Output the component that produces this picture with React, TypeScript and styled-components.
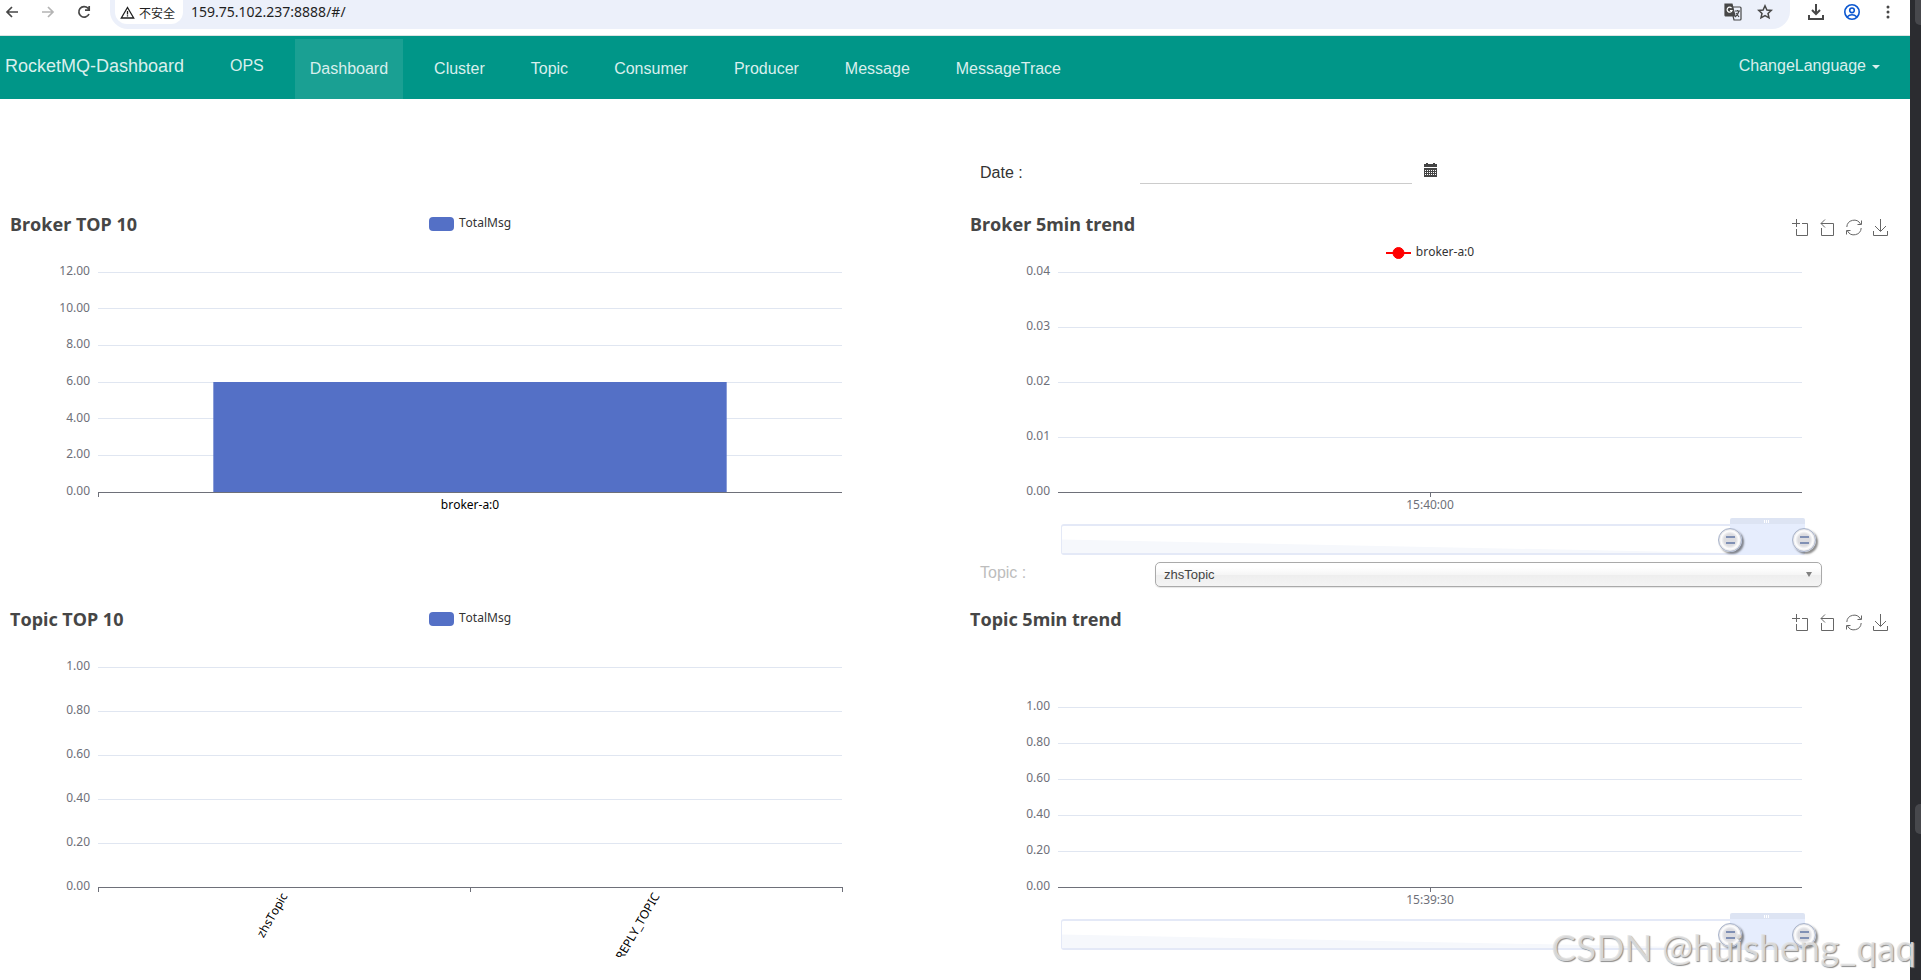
import React, { useState } from "react";
import styled, { createGlobalStyle } from "styled-components";

const UI_FONT = `"Liberation Sans", Arial, sans-serif`;
const CHART_FONT = `"Noto Sans", "Noto Sans CJK SC", sans-serif`;

const GlobalStyle = createGlobalStyle`
  * { box-sizing: border-box; }
  body { margin: 0; background: #fff; color: #333; font-family: ${UI_FONT}; font-size: 16px; }
  button, input, select { font: inherit; }
  button { border: 0; padding: 0; background: none; color: inherit; cursor: pointer; }
  h1, h2, ul { margin: 0; padding: 0; }
`;

const Screen = styled.div`
  display: flex;
  min-height: 100vh;
  position: relative;
  overflow: hidden;
`;

const Window = styled.div`
  flex: 1;
  min-width: 0;
`;

const Rail = styled.aside`
  width: 11px;
  background: #2b2c30;
  display: flex;
  flex-direction: column;
  justify-content: space-between;
  align-items: flex-end;
  padding-bottom: 146px;
`;

const RailTab = styled.div`
  width: 6px;
  height: 25px;
  background: #47484c;
  border-radius: 0 0 0 5px;
`;

const RailHandle = styled(RailTab)`
  height: 30px;
  border-radius: 5px 0 0 5px;
`;

/* ---------- browser bar ---------- */

const BrowserBar = styled.header`
  height: 36px;
  display: flex;
  align-items: flex-start;
  border-bottom: 1px solid #dbe3e2;
  color: #474747;
  padding-right: 4px;
`;

const BarButton = styled.button<{ $dim?: boolean; $narrow?: boolean }>`
  width: ${(p) => (p.$narrow ? 32 : 36)}px;
  height: 24px;
  display: flex;
  align-items: center;
  justify-content: center;
  color: ${(p) => (p.$dim ? "#b4b4b4" : "inherit")};
`;

const HistoryButtons = styled.div`
  display: flex;
  width: 110px;
  margin-left: -6px;
`;

const AddressBar = styled.div`
  flex: 1;
  height: 29px;
  margin-left: 6px;
  margin-right: 8px;
  display: flex;
  background: #ecf0fa;
  border-radius: 0 0 18px 18px;
  padding: 0 9px 0 5px;
`;

const SecurityChip = styled.button`
  height: 24px;
  width: 68px;
  background: #fff;
  border-radius: 0 0 12px 12px;
  display: flex;
  align-items: center;
  gap: 4px;
  padding-left: 5px;
  font-family: "Noto Sans CJK SC", sans-serif;
  font-size: 12px;
  color: #1f1f1f;
  white-space: nowrap;
`;

const Url = styled.input`
  flex: 1;
  height: 22px;
  margin-left: 8px;
  padding: 0;
  border: 0;
  outline: 0;
  background: none;
  font-family: ${CHART_FONT};
  font-size: 14px;
  color: #1f1f1f;
`;

const GlyphBox = styled.svg`
  display: block;
  flex: none;
  fill: none;
  stroke: currentColor;
`;

/* ---------- application navbar ---------- */

const Navbar = styled.nav`
  height: 63px;
  background: #009688;
  display: flex;
  align-items: flex-start;
  padding: 0 15px 0 5px;
  color: #d9efed;
  line-height: 60px;
`;

const Brand = styled.a`
  width: 225px;
  font-size: 18px;
  color: inherit;
  text-decoration: none;
`;

const OpsLink = styled.a`
  margin-right: 31px;
  color: inherit;
  text-decoration: none;
`;

const Tabs = styled.ul`
  display: flex;
  gap: 16px;
  margin-top: 3px;
  list-style: none;
`;

const TabLink = styled.a<{ $active?: boolean }>`
  display: block;
  height: 60px;
  padding: 0 15px;
  color: inherit;
  text-decoration: none;
  background: ${(p) => (p.$active ? "#1aa093" : "transparent")};
`;

const LanguageButton = styled.button`
  margin-left: auto;
  padding: 0 15px;
  line-height: 60px;
  display: flex;
  align-items: center;
  gap: 6px;
`;

const Caret = styled.span`
  border: 4px solid transparent;
  border-top-color: currentColor;
  border-bottom: 0;
  margin-top: 2px;
`;

/* ---------- dashboard grid ---------- */

const Dashboard = styled.main`
  display: grid;
  grid-template-columns: minmax(0, 1fr) minmax(0, 1fr);
  column-gap: 30px;
  padding: 0 15px 23px 5px;
`;

const DateRow = styled.div`
  grid-column: 2;
  height: 113px;
  padding: 61px 0 0 15px;
  display: flex;
  align-items: flex-start;
`;

const DateLabel = styled.label`
  width: 160px;
  line-height: 26px;
`;

const DateInput = styled.input`
  width: 272px;
  height: 24px;
  border: 0;
  border-bottom: 1px solid #ccc;
  outline: 0;
  padding: 0;
`;

const CalendarButton = styled.button`
  height: 20px;
  margin-left: 12px;
  color: #444;
  display: flex;
  align-items: center;
`;

const TopicRow = styled.div`
  grid-column: 2;
  height: 45px;
  padding: 0 73px 0 15px;
  display: flex;
  align-items: flex-start;
`;

const TopicLabel = styled.label`
  width: 175px;
  line-height: 22px;
  color: #bdbdbd;
`;

const SelectBox = styled.div`
  flex: 1;
  position: relative;
`;

const TopicSelect = styled.select`
  width: 100%;
  height: 25px;
  display: block;
  appearance: none;
  border: 1px solid #aaa;
  border-radius: 5px;
  padding: 0 8px;
  font-size: 13px;
  color: #444;
  outline: 0;
  background: linear-gradient(#fff 20%, #f6f6f6 50%, #eee 52%, #f4f4f4 100%);
  box-shadow: 0 1px 1px rgba(0, 0, 0, 0.1);
`;

const SelectArrow = styled.span`
  position: absolute;
  right: 10px;
  top: 10px;
  border: 3px solid transparent;
  border-top: 5px solid #808080;
  border-bottom: 0;
  pointer-events: none;
`;

const Panel = styled.section`
  height: 350px;
  display: flex;
  flex-direction: column;
  font-family: ${CHART_FONT};
  font-kerning: none;
`;

const PanelHead = styled.div`
  height: 24px;
  flex: none;
  display: grid;
  grid-template-columns: 1fr auto 1fr;
  padding: 0 5px;
`;

const PanelTitle = styled.h2`
  font-size: 18px;
  line-height: 24px;
  font-weight: 700;
  color: #464646;
  white-space: nowrap;
`;

const Legend = styled.div`
  display: flex;
  align-items: center;
  justify-content: center;
  gap: 5px;
  height: 24px;
  font-size: 12px;
  line-height: 22px;
  color: #333;
`;

const LegendText = styled.span`
  height: 24px;
`;

const Swatch = styled.span`
  width: 25px;
  height: 14px;
  border-radius: 4px;
  background: #5470c6;
`;

const TrendLegend = styled(Legend)`
  flex: none;
  margin-top: 5px;
`;

const Toolbox = styled.div`
  grid-column: 3;
  justify-self: end;
  display: flex;
  gap: 11px;
  padding: 7px 1px 0 0;
`;

const ToolButton = styled.button`
  width: 16px;
  height: 17px;
  color: #666;
`;

const PlotArea = styled.div`
  flex: 1;
  min-height: 0;
  position: relative;
  display: flex;
`;

const Plot = styled.svg<{ $clip?: boolean }>`
  width: 100%;
  height: 100%;
  display: block;
  overflow: ${(p) => (p.$clip ? "hidden" : "visible")};
  font-family: ${CHART_FONT};
  font-size: 12px;
`;

/* ---------- zoom slider under the trend charts ---------- */

const ZoomTrack = styled.div`
  position: absolute;
  left: calc(10% + 3px);
  right: calc(10% - 3px);
  bottom: 7px;
  height: 31px;
  border: 2px solid #e4e9f7;
  border-left-width: 1px;
  border-radius: 3px;
`;

const ZoomShadow = styled.svg`
  display: block;
  width: 90%;
  height: 100%;
`;

const ZoomWindow = styled.div`
  position: absolute;
  top: -8px;
  bottom: -2px;
  background: #e6edfd;
  border-top: 6px solid #dde4f3;
  border-radius: 2px;
`;

const ZoomGrip = styled.span`
  position: absolute;
  left: calc(50% - 3px);
  top: -4px;
  width: 6px;
  height: 3px;
  background: repeating-linear-gradient(90deg, #fff 0 1px, transparent 1px 2px);
`;

const ZoomHandle = styled.input`
  position: absolute;
  left: -11px;
  top: 2px;
  width: calc(100% + 24px);
  height: 24px;
  margin: 0;
  appearance: none;
  background: none;
  pointer-events: none;

  &::-webkit-slider-thumb {
    appearance: none;
    pointer-events: auto;
    width: 24px;
    height: 24px;
    border: 1px solid #a9b4cb;
    border-radius: 50%;
    background:
      linear-gradient(#8090b4, #8090b4) 7px 7px / 9px 2px no-repeat,
      linear-gradient(#8090b4, #8090b4) 7px 13px / 9px 2px no-repeat,
      radial-gradient(circle, #dcdce0 0 6px, #fff 9px, #e0e0e4 11px);
    box-shadow: 2px 2px 2px rgba(0, 0, 0, 0.45);
  }
`;

const Watermark = styled.div`
  position: absolute;
  right: 5px;
  bottom: 11px;
  font-family: Lato, sans-serif;
  font-size: 37px;
  line-height: 44px;
  color: rgba(228, 228, 228, 0.85);
  text-shadow: 1px 1px 1px #8c8c8c;
  white-space: nowrap;
  pointer-events: none;
`;

/* ---------- pieces ---------- */

const TOOL_PATHS: Record<string, string> = {
  "Zoom area": "M4.500 0V8M0 4.500H8M10 4.500H15.500V16.500H4.500V10",
  "Reset zoom": "M6 0.500L2 4.500L6 8.500M2 4.500H14.500V16.500H2.500V9",
  Restore: "M0.800 8A7.300 7.300 0 0 1 14.500 5M15.500 1.500V5.500H11.500M15.200 9A7.300 7.300 0 0 1 1.500 12M0.500 15.500V11.500H4.500",
  "Save as image": "M7.500 0V12M2 7L7.500 12.500L13 7M0.500 12V16.500H14.500V12",
};

function Tools() {
  return (
    <Toolbox>
      {Object.entries(TOOL_PATHS).map(([name, d]) => (
        <ToolButton key={name} aria-label={name}>
          <GlyphBox width="16" height="17" viewBox="0 0 16 17" strokeWidth="1">
            <path d={d} />
          </GlyphBox>
        </ToolButton>
      ))}
    </Toolbox>
  );
}

type AxisLabel = { at: number; text: string; rotate?: boolean; dark?: boolean };

type PlotProps = {
  ticks: string[];
  top: number;
  bottom: number;
  labels: AxisLabel[];
  marks: number[];
  bar?: { left: number; width: number; share: number };
  clip?: boolean;
};

function Chart({ ticks, top, bottom, labels, marks, bar, clip }: PlotProps) {
  const step = (bottom - top) / (ticks.length - 1);
  return (
    <Plot role="img" $clip={clip}>
      {ticks.map((tick, i) => {
        const y = bottom - step * i;
        return (
          <React.Fragment key={tick}>
            <rect
              x="10%"
              y={Math.floor(y)}
              width="80%"
              height="1"
              fill={i ? "#e0e6f1" : "#6e7079"}
              shapeRendering="crispEdges"
            />
            <text x="10%" dx="-8" y={Math.round(y) + 3} textAnchor="end" fill="#6e7079">
              {tick}
            </text>
          </React.Fragment>
        );
      })}
      {bar && (
        <rect
          x={`${bar.left}%`}
          y={bottom - (bottom - top) * bar.share}
          width={`${bar.width}%`}
          height={(bottom - top) * bar.share}
          fill="#5470c6"
        />
      )}
      {marks.map((m) => (
        <rect
          key={m}
          x={`${m}%`}
          y={bottom}
          width="1"
          height="5"
          fill="#6e7079"
          shapeRendering="crispEdges"
        />
      ))}
      {labels.map((l) => (
        <svg key={l.text} x={`${l.at}%`} y={bottom} overflow="visible">
          {l.rotate ? (
            <text transform="translate(4 9) rotate(-60)" textAnchor="end" fill="#000">
              {l.text}
            </text>
          ) : (
            <text y="17" textAnchor="middle" fill={l.dark ? "#000" : "#6e7079"}>
              {l.text}
            </text>
          )}
        </svg>
      ))}
    </Plot>
  );
}

function RangeZoom({ name }: { name: string }) {
  const [start, setStart] = useState(90);
  const [end, setEnd] = useState(100);
  return (
    <ZoomTrack>
      <ZoomShadow viewBox="0 0 100 26" preserveAspectRatio="none">
        <path d="M0 13L100 26H0Z" fill="#f6f8fc" />
      </ZoomShadow>
      <ZoomWindow style={{ left: `calc(${start}% + 1px)`, right: `calc(${100 - end}% - 2px)` }}>
        <ZoomGrip />
      </ZoomWindow>
      <ZoomHandle
        type="range"
        aria-label={`${name} start`}
        value={start}
        onChange={(e) => setStart(Math.min(Number(e.target.value), end))}
      />
      <ZoomHandle
        type="range"
        aria-label={`${name} end`}
        value={end}
        onChange={(e) => setEnd(Math.max(Number(e.target.value), start))}
      />
    </ZoomTrack>
  );
}

function TotalLegend() {
  return (
    <Legend>
      <Swatch />
      <LegendText>TotalMsg</LegendText>
    </Legend>
  );
}

const TABS = ["Dashboard", "Cluster", "Topic", "Consumer", "Producer", "Message", "MessageTrace"];

export default function App() {
  return (
    <Screen>
      <GlobalStyle />
      <Window>
        <BrowserBar>
          <HistoryButtons>
            <BarButton aria-label="Back">
              <GlyphBox width="14" height="14" viewBox="0 0 14 14" strokeWidth="1.7">
                <path d="M13 7H2M7 2L2 7L7 12" />
              </GlyphBox>
            </BarButton>
            <BarButton aria-label="Forward" $dim>
              <GlyphBox width="14" height="14" viewBox="0 0 14 14" strokeWidth="1.7">
                <path d="M1 7H12M7 2L12 7L7 12" />
              </GlyphBox>
            </BarButton>
            <BarButton aria-label="Reload">
              <GlyphBox width="14" height="14" viewBox="0 0 14 14" strokeWidth="1.7">
                <path d="M12 9A5.3 5.3 0 1 1 11 3.2L12 4.3M12.2 1V5.2H8" />
              </GlyphBox>
            </BarButton>
          </HistoryButtons>
          <AddressBar>
            <SecurityChip>
              <GlyphBox width="15" height="13" viewBox="0 0 15 13" strokeWidth="1.300">
                <path d="M7.5 1.5L13.7 12H1.3ZM7.5 5V8.5M7.5 9.3V10.6" />
              </GlyphBox>
              不安全
            </SecurityChip>
            <Url aria-label="Address" defaultValue="159.75.102.237:8888/#/" />
            <BarButton aria-label="Translate" $narrow>
              <GlyphBox width="18" height="18" viewBox="0 0 18 18" strokeWidth="1.2">
                <path d="M1 1H8L11 13H2Q1 13 1 12Z" fill="currentColor" />
                <path d="M9 4H16Q17 4 17 5V16Q17 17 16 17H10L9 13M11 8H16M13.500 7V8M15 8Q14 12 11 14M12 10L15 14" />
                <path d="M7.500 5A2.500 2.500 0 1 0 8 7.500H6" stroke="#fff" />
              </GlyphBox>
            </BarButton>
            <BarButton aria-label="Bookmark" $narrow>
              <GlyphBox width="16" height="16" viewBox="0 0 16 16" strokeWidth="1.5">
                <path d="M8 1.800L9.900 6L14.300 6.400L11 9.400L12 13.800L8 11.500L4 13.800L5 9.400L1.700 6.400L6.100 6Z" />
              </GlyphBox>
            </BarButton>
          </AddressBar>
          <BarButton aria-label="Downloads">
            <GlyphBox width="16" height="16" viewBox="0 0 16 16" strokeWidth="2">
              <path d="M8 0V10M4 6L8 10L12 6M1 11V15H15V11" />
            </GlyphBox>
          </BarButton>
          <BarButton aria-label="Profile">
            <GlyphBox width="16" height="16" viewBox="0 0 16 16" strokeWidth="1.6" color="#0b57d0">
              <circle cx="8" cy="8" r="7.200" />
              <circle cx="8" cy="6.300" r="2.300" />
              <path d="M3 13Q8 8.500 13 13" />
            </GlyphBox>
          </BarButton>
          <BarButton aria-label="Menu">
            <GlyphBox width="4" height="16" viewBox="0 0 4 16" stroke="none">
              <g fill="currentColor" stroke="none">
                <circle cx="2" cy="3" r="1.500" />
                <circle cx="2" cy="8" r="1.500" />
                <circle cx="2" cy="13" r="1.500" />
              </g>
            </GlyphBox>
          </BarButton>
        </BrowserBar>

        <Navbar>
          <Brand href="#/">RocketMQ-Dashboard</Brand>
          <OpsLink href="#/ops">OPS</OpsLink>
          <Tabs>
            {TABS.map((tab) => (
              <li key={tab}>
                <TabLink href={`#/${tab.toLowerCase()}`} $active={tab === "Dashboard"}>
                  {tab}
                </TabLink>
              </li>
            ))}
          </Tabs>
          <LanguageButton>
            ChangeLanguage
            <Caret />
          </LanguageButton>
        </Navbar>

        <Dashboard>
          <DateRow>
            <DateLabel htmlFor="date">Date :</DateLabel>
            <DateInput id="date" type="text" />
            <CalendarButton aria-label="Pick a date">
              <GlyphBox width="13" height="14" viewBox="0 0 13 14" stroke="none">
                <g fill="currentColor" stroke="none">
                  <path d="M0 1H2V0H4V1H9V0H11V1H13V4H0Z" />
                  <path d="M0 5H13V14H0Z" />
                </g>
                <path
                  d="M1 7.500H12M1 9.500H12M1 11.500H12"
                  stroke="#fff"
                  strokeWidth="1"
                  strokeDasharray="1 1"
                />
              </GlyphBox>
            </CalendarButton>
          </DateRow>

          <Panel>
            <PanelHead>
              <PanelTitle>Broker TOP 10</PanelTitle>
              <TotalLegend />
            </PanelHead>
            <PlotArea>
              <Chart
                ticks={["0.00", "2.00", "4.00", "6.00", "8.00", "10.00", "12.00"]}
                top={36}
                bottom={256}
                marks={[10]}
                labels={[{ at: 50, text: "broker-a:0", dark: true }]}
                bar={{ left: 22.4, width: 55.2, share: 0.5 }}
              />
            </PlotArea>
          </Panel>

          <Panel>
            <PanelHead>
              <PanelTitle>Broker 5min trend</PanelTitle>
              <Tools />
            </PanelHead>
            <TrendLegend>
              <GlyphBox width="25" height="12" viewBox="0 0 25 12" color="#f00">
                <path d="M0 6H25" strokeWidth="2" />
                <circle cx="12.500" cy="6" r="5.500" fill="currentColor" />
              </GlyphBox>
              <LegendText>broker-a:0</LegendText>
            </TrendLegend>
            <PlotArea>
              <Chart
                ticks={["0.00", "0.01", "0.02", "0.03", "0.04"]}
                top={7}
                bottom={227}
                marks={[50]}
                labels={[{ at: 50, text: "15:40:00" }]}
              />
              <RangeZoom name="Broker trend" />
            </PlotArea>
          </Panel>

          <TopicRow>
            <TopicLabel htmlFor="topic">Topic :</TopicLabel>
            <SelectBox>
              <TopicSelect id="topic">
                <option>zhsTopic</option>
              </TopicSelect>
              <SelectArrow />
            </SelectBox>
          </TopicRow>

          <Panel>
            <PanelHead>
              <PanelTitle>Topic TOP 10</PanelTitle>
              <TotalLegend />
            </PanelHead>
            <PlotArea>
              <Chart
                ticks={["0.00", "0.20", "0.40", "0.60", "0.80", "1.00"]}
                top={36}
                bottom={256}
                marks={[10, 50, 90]}
                labels={[
                  { at: 30, text: "zhsTopic", rotate: true },
                  { at: 70, text: "REPLY_TOPIC", rotate: true },
                ]}
                clip
              />
            </PlotArea>
          </Panel>

          <Panel>
            <PanelHead>
              <PanelTitle>Topic 5min trend</PanelTitle>
              <Tools />
            </PanelHead>
            <PlotArea>
              <Chart
                ticks={["0.00", "0.20", "0.40", "0.60", "0.80", "1.00"]}
                top={76}
                bottom={256}
                marks={[50]}
                labels={[{ at: 50, text: "15:39:30" }]}
              />
              <RangeZoom name="Topic trend" />
            </PlotArea>
          </Panel>
        </Dashboard>
      </Window>
      <Rail>
        <RailTab />
        <RailHandle />
      </Rail>
      <Watermark>CSDN @huisheng_qaq</Watermark>
    </Screen>
  );
}
